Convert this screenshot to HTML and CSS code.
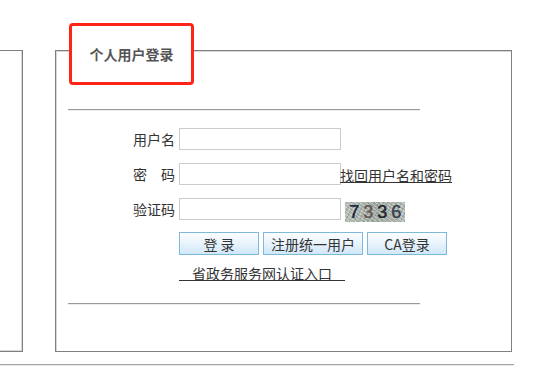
FILE: index.html
```html
<!DOCTYPE html>
<html lang="zh-CN">
<head>
    <meta charset="UTF-8">
    <meta name="viewport" content="width=device-width, initial-scale=1.0">
    <title>个人用户登录</title>
    <link rel="stylesheet" href="styles.css">
</head>
<body>
    <div class="panels">
        <div class="side"></div>
        <div class="login">
            <div class="tab">个人用户登录</div>
            <hr class="rule">
            <form class="form" onsubmit="return false;">
                <div class="row">
                    <label for="username">用户名</label>
                    <input type="text" id="username" name="username">
                </div>
                <div class="row">
                    <label for="password">密　码</label>
                    <input type="password" id="password" name="password">
                    <a href="#" class="link">找回用户名和密码</a>
                </div>
                <div class="row">
                    <label for="code">验证码</label>
                    <input type="text" id="code" name="code">
                    <span class="captcha"><b class="d1">7</b><b class="d2">3</b><b class="d3">3</b><b class="d4">6</b></span>
                </div>
                <div class="buttons">
                    <button type="submit" class="btn">登 录</button>
                    <button type="button" class="btn btn-wide">注册统一用户</button>
                    <button type="button" class="btn">CA登录</button>
                </div>
                <div class="portal">
                    <a href="#">省政务服务网认证入口</a>
                </div>
            </form>
            <hr class="rule rule-bottom">
        </div>
    </div>
    <div class="baseline"></div>
</body>
</html>
```

FILE: styles.css
```css
body {
    margin: 0;
    font-family: "Noto Sans CJK SC", "Liberation Sans", sans-serif;
    font-size: 14px;
    color: #333;
    background: #fff;
}
.panels {
    display: flex;
    padding-top: 50px;
}
.side {
    width: 23px;
    height: 302px;
    box-sizing: border-box;
    border: 1px solid #808080;
    border-left: none;
    box-shadow: inset -1px -1px 0 #d6d6d6;
}
.login {
    position: relative;
    margin-left: 32px;
    width: 457px;
    height: 302px;
    box-sizing: border-box;
    border: 1px solid #808080;
    box-shadow: inset 1px 1px 0 #d6d6d6;
    padding-top: 58px;
}
.tab {
    position: absolute;
    left: 13px;
    top: -28px;
    width: 125px;
    height: 62px;
    box-sizing: border-box;
    border: 3px solid #ff2418;
    border-radius: 4px;
    background: #fff;
    display: flex;
    align-items: center;
    justify-content: center;
    font-weight: bold;
    color: #555;
}
.rule {
    margin: 0 0 0 12px;
    width: 352px;
    height: 0;
    border: 0;
    border-top: 1px solid #9a9a9a;
    border-bottom: 1px solid #ececec;
}
.rule-bottom {
    margin-top: 25px;
}
.form {
    margin: 17px 0 0 63px;
}
.row {
    display: flex;
    align-items: center;
    height: 22px;
    margin-bottom: 13px;
}
.row label {
    width: 56px;
    margin-right: 4px;
    text-align: right;
    line-height: 22px;
}
.row input {
    width: 162px;
    height: 22px;
    box-sizing: border-box;
    margin: 0;
    padding: 0 3px;
    border: 1px solid #cccccc;
    outline: none;
}
.link {
    margin-left: -1px;
    color: #333;
    text-decoration: underline;
    line-height: 16px;
    padding-top: 2px;
}
.captcha {
    align-self: flex-end;
    margin: 0 0 -2px 4px;
    width: 60px;
    height: 20px;
    display: flex;
    align-items: center;
    justify-content: center;
    gap: 4px;
    font-family: "Liberation Sans", sans-serif;
    font-size: 18px;
    line-height: 20px;
    background-color: #a9b1aa;
    background-image:
        repeating-linear-gradient(35deg, rgba(255,255,255,0.35) 0 1px, transparent 1px 3px),
        repeating-linear-gradient(-60deg, rgba(90,110,90,0.3) 0 1px, transparent 1px 4px),
        linear-gradient(90deg, #b4bab4, #9ea89f 50%, #b0b6b2);
}
.captcha b {
    font-weight: normal;
    text-shadow: 0.5px 0 0 currentColor;
}
.captcha .d1 { color: #1d2a44; }
.captcha .d2 { color: #6b5856; }
.captcha .d3 { color: #262a36; }
.captcha .d4 { color: #3c4656; }
.row:nth-child(3) {
    margin-bottom: 12px;
}
.buttons {
    display: flex;
    gap: 4px;
    margin-left: 60px;
}
.btn {
    width: 80px;
    height: 23px;
    margin: 0;
    padding: 0;
    border: 1px solid #7db9da;
    border-radius: 0;
    background: linear-gradient(#fdfeff, #eaf4fc 45%, #d0e7f8);
    font-family: inherit;
    font-size: 14px;
    color: #333;
    line-height: 20px;
}
.btn-wide {
    width: 100px;
}
.portal {
    height: 15px;
    margin: 8px 0 0 60px;
}
.portal a {
    display: inline-block;
    padding: 0 13px 0 13px;
    line-height: 14px;
    color: #333;
    text-decoration: none;
    border-bottom: 1px solid #333;
}
.baseline {
    width: 514px;
    margin-top: 12px;
    border-top: 1px solid #a6a6a6;
    border-bottom: 1px solid #e6e6e6;
}
```
